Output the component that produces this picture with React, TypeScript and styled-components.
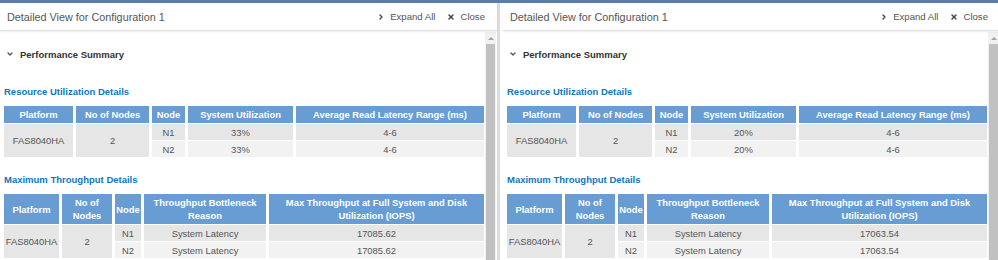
import React from 'react';
import styled, { createGlobalStyle } from 'styled-components';
import { ChevronDown, ChevronRight, X } from 'lucide-react';

const GlobalStyle = createGlobalStyle`
	html, body {
		margin: 0;
		padding: 0;
		background: #fff;
		overflow: hidden;
	}
	body {
		font-family: 'Liberation Sans', Arial, sans-serif;
	}
`;

type Row = { node: string; a: string; b: string };

type Config = {
	utilization: string;
	throughput: string;
};

const configs: Config[] = [
	{ utilization: '33%', throughput: '17085.62' },
	{ utilization: '20%', throughput: '17063.54' },
];

const Panel = ({ config, offset }: { config: Config; offset?: boolean }) => {
	const resourceRows: Row[] = [
		{ node: 'N1', a: config.utilization, b: '4-6' },
		{ node: 'N2', a: config.utilization, b: '4-6' },
	];
	const throughputRows: Row[] = [
		{ node: 'N1', a: 'System Latency', b: config.throughput },
		{ node: 'N2', a: 'System Latency', b: config.throughput },
	];

	return (
		<PanelBox $offset={offset}>
			<Header>
				<Title>Detailed View for Configuration 1</Title>
				<Actions>
					<Action>
						<ChevronRight size={8} strokeWidth={4} />
						Expand All
					</Action>
					<Action>
						<X size={8} strokeWidth={4} />
						Close
					</Action>
				</Actions>
			</Header>
			<Body>
				<Content>
					<Summary>
						<ChevronDown size={8} strokeWidth={4} />
						Performance Summary
					</Summary>

					<SectionTitle $top={23}>Resource Utilization Details</SectionTitle>
					<Grid $cols='69px 73px 33px 105px 188px' $rows='17px 16px 16px'>
						<HeadCell>Platform</HeadCell>
						<HeadCell>No of Nodes</HeadCell>
						<HeadCell>Node</HeadCell>
						<HeadCell>System Utilization</HeadCell>
						<HeadCell>Average Read Latency Range (ms)</HeadCell>
						<Cell $span>FAS8040HA</Cell>
						<Cell $span>2</Cell>
						{resourceRows.map((r, i) => (
							<React.Fragment key={r.node}>
								<Cell $light={i === 1}>{r.node}</Cell>
								<Cell $light={i === 1}>{r.a}</Cell>
								<Cell $light={i === 1}>{r.b}</Cell>
							</React.Fragment>
						))}
					</Grid>

					<SectionTitle $top={16}>Maximum Throughput Details</SectionTitle>
					<Grid $cols='55px 50px 26px 122px 215px' $rows='30px 16px 16px'>
						<HeadCell>Platform</HeadCell>
						<HeadCell>
							No of
							<br />
							Nodes
						</HeadCell>
						<HeadCell>Node</HeadCell>
						<HeadCell>
							Throughput Bottleneck
							<br />
							Reason
						</HeadCell>
						<HeadCell>
							Max Throughput at Full System and Disk
							<br />
							Utilization (IOPS)
						</HeadCell>
						<Cell $span>FAS8040HA</Cell>
						<Cell $span>2</Cell>
						{throughputRows.map((r, i) => (
							<React.Fragment key={r.node}>
								<Cell $light={i === 1}>{r.node}</Cell>
								<Cell $light={i === 1}>{r.a}</Cell>
								<Cell $light={i === 1}>{r.b}</Cell>
							</React.Fragment>
						))}
					</Grid>
				</Content>
				<Scrollbar>
					<ArrowUp />
					<Thumb />
				</Scrollbar>
			</Body>
		</PanelBox>
	);
};

const App = () => {
	return (
		<>
			<GlobalStyle />
			<Page>
				<TopBar />
				<Panels>
					<Panel config={configs[0]} />
					<Divider />
					<Panel config={configs[1]} offset />
				</Panels>
			</Page>
		</>
	);
};

const Page = styled.div`
	width: 998px;
	height: 260px;
	overflow: hidden;
	display: flex;
	flex-direction: column;
`;

const TopBar = styled.div`
	height: 3px;
	flex-shrink: 0;
	background: #5a7da5;
`;

const Panels = styled.div`
	flex: 1;
	display: flex;
	min-height: 0;
`;

const Divider = styled.div`
	width: 3px;
	flex-shrink: 0;
	background: #dcdcdc;
`;

const PanelBox = styled.section<{ $offset?: boolean }>`
	width: 497px;
	flex-shrink: 0;
	margin-left: ${(p) => (p.$offset ? '3px' : '0')};
	display: flex;
	flex-direction: column;
	background: #fff;
`;

const Header = styled.header`
	height: 27px;
	flex-shrink: 0;
	padding: 0 12px 0 7px;
	display: flex;
	align-items: center;
	justify-content: space-between;
	border-bottom: 1px solid #e2e2e2;
	box-shadow: 0 1px 2px rgba(0, 0, 0, 0.08);
	position: relative;
	z-index: 1;
`;

const Title = styled.h2`
	margin: 0;
	font-size: 10.8px;
	font-weight: 400;
	color: #555;
`;

const Actions = styled.div`
	display: flex;
	gap: 12px;
`;

const Action = styled.span`
	display: flex;
	align-items: center;
	gap: 5px;
	font-size: 9.6px;
	color: #555;

	svg {
		color: #444;
	}
`;

const Body = styled.div`
	flex: 1;
	min-height: 0;
	display: flex;
	padding-top: 1px;
`;

const Content = styled.div`
	flex: 1;
	padding: 14px 1px 0 4px;
	display: flex;
	flex-direction: column;
`;

const Summary = styled.div`
	height: 16px;
	padding-left: 2px;
	display: flex;
	align-items: center;
	gap: 6px;
	font-size: 9.5px;
	font-weight: 700;
	color: #333;

	svg {
		color: #555;
	}
`;

const SectionTitle = styled.h3<{ $top: number }>`
	margin: ${(p) => p.$top}px 0 7px;
	height: 14px;
	line-height: 14px;
	font-size: 9.5px;
	font-weight: 700;
	color: #0d77c2;
`;

const Grid = styled.div<{ $cols: string; $rows: string }>`
	display: grid;
	grid-template-columns: ${(p) => p.$cols};
	grid-template-rows: ${(p) => p.$rows};
	column-gap: 3px;
	row-gap: 1px;
	font-size: 9.4px;
`;

const HeadCell = styled.div`
	background: #679dd3;
	color: #fff;
	font-weight: 700;
	line-height: 13px;
	display: flex;
	align-items: center;
	justify-content: center;
	text-align: center;
`;

const Cell = styled.div<{ $span?: boolean; $light?: boolean }>`
	grid-row: ${(p) => (p.$span ? 'span 2' : 'auto')};
	background: ${(p) => (p.$light ? '#f2f2f2' : '#e6e6e6')};
	color: #555;
	display: flex;
	align-items: center;
	justify-content: center;
`;

const Scrollbar = styled.div`
	width: 11px;
	flex-shrink: 0;
	margin-right: 1px;
	background: #f1f1f1;
	display: flex;
	flex-direction: column;
	align-items: center;
`;

const ArrowUp = styled.div`
	margin-top: 5px;
	width: 0;
	height: 0;
	border-left: 3px solid transparent;
	border-right: 3px solid transparent;
	border-bottom: 3px solid #a3a3a3;
`;

const Thumb = styled.div`
	margin-top: 4px;
	width: 9px;
	flex: 1;
	background: #c1c1c1;
`;

export default App;
